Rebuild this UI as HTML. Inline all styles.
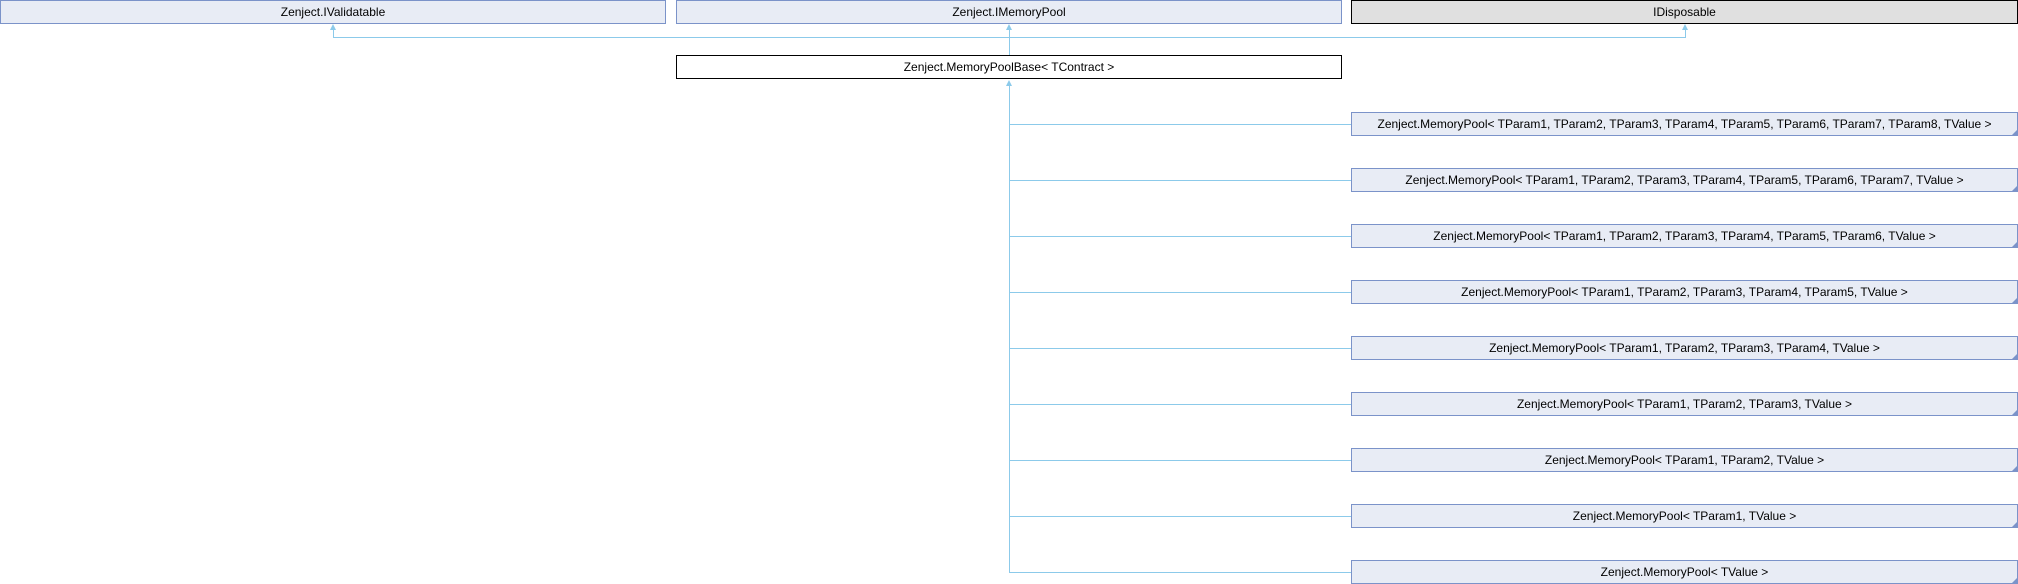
<!DOCTYPE html>
<html><head><meta charset="utf-8"><style>
body{margin:0;width:2018px;height:584px;background:#fff;position:relative;overflow:hidden;font-family:"Liberation Sans",sans-serif;font-size:12px;}
.b{position:absolute;box-sizing:border-box;height:24px;line-height:22px;text-align:center;background:#e8ecf5;border:1px solid #7b93c9;color:#000;white-space:nowrap;}
.g{background:#e0e0e0;border-color:#000;}
.w{background:#fff;border-color:#000;}
.l{position:absolute;background:#8ccaea;}
.c:after{content:"";position:absolute;right:0;bottom:0;border-style:solid;border-width:0 0 5px 5px;border-color:transparent transparent #7b93c9 transparent;}
.ar{position:absolute;width:0;height:0;border-left:3px solid transparent;border-right:3px solid transparent;border-bottom:6px solid #8ccaea;}
</style></head><body>
<div class="b" style="left:0;top:0;width:666px">Zenject.IValidatable</div>
<div class="b" style="left:676px;top:0;width:666px">Zenject.IMemoryPool</div>
<div class="b g" style="left:1351px;top:0;width:667px">IDisposable</div>
<div class="l" style="left:333px;top:37px;width:1353px;height:1px"></div>
<div class="l" style="left:333px;top:26px;width:1px;height:11px"></div>
<div class="l" style="left:1685px;top:26px;width:1px;height:11px"></div>
<div class="l" style="left:1009px;top:26px;width:1px;height:29px"></div>
<div class="ar" style="left:330px;top:24px"></div>
<div class="ar" style="left:1006px;top:24px"></div>
<div class="ar" style="left:1682px;top:24px"></div>
<div class="b w" style="left:676px;top:55px;width:666px">Zenject.MemoryPoolBase&lt; TContract &gt;</div>
<div class="ar" style="left:1006px;top:80px"></div>
<div class="l" style="left:1009px;top:82px;width:1px;height:490px"></div>
<div id="k"></div>
<script>
var t=["Zenject.MemoryPool&lt; TParam1, TParam2, TParam3, TParam4, TParam5, TParam6, TParam7, TParam8, TValue &gt;","Zenject.MemoryPool&lt; TParam1, TParam2, TParam3, TParam4, TParam5, TParam6, TParam7, TValue &gt;","Zenject.MemoryPool&lt; TParam1, TParam2, TParam3, TParam4, TParam5, TParam6, TValue &gt;","Zenject.MemoryPool&lt; TParam1, TParam2, TParam3, TParam4, TParam5, TValue &gt;","Zenject.MemoryPool&lt; TParam1, TParam2, TParam3, TParam4, TValue &gt;","Zenject.MemoryPool&lt; TParam1, TParam2, TParam3, TValue &gt;","Zenject.MemoryPool&lt; TParam1, TParam2, TValue &gt;","Zenject.MemoryPool&lt; TParam1, TValue &gt;","Zenject.MemoryPool&lt; TValue &gt;"];
var y=[112,168,224,280,336,392,448,504,560],h="";
for(var i=0;i<9;i++){h+='<div class="b c" style="left:1351px;top:'+y[i]+'px;width:667px">'+t[i]+'</div><div class="l" style="left:1009px;top:'+(y[i]+12)+'px;width:342px;height:1px"></div>';}
document.getElementById("k").innerHTML=h;
</script>
</body></html>
